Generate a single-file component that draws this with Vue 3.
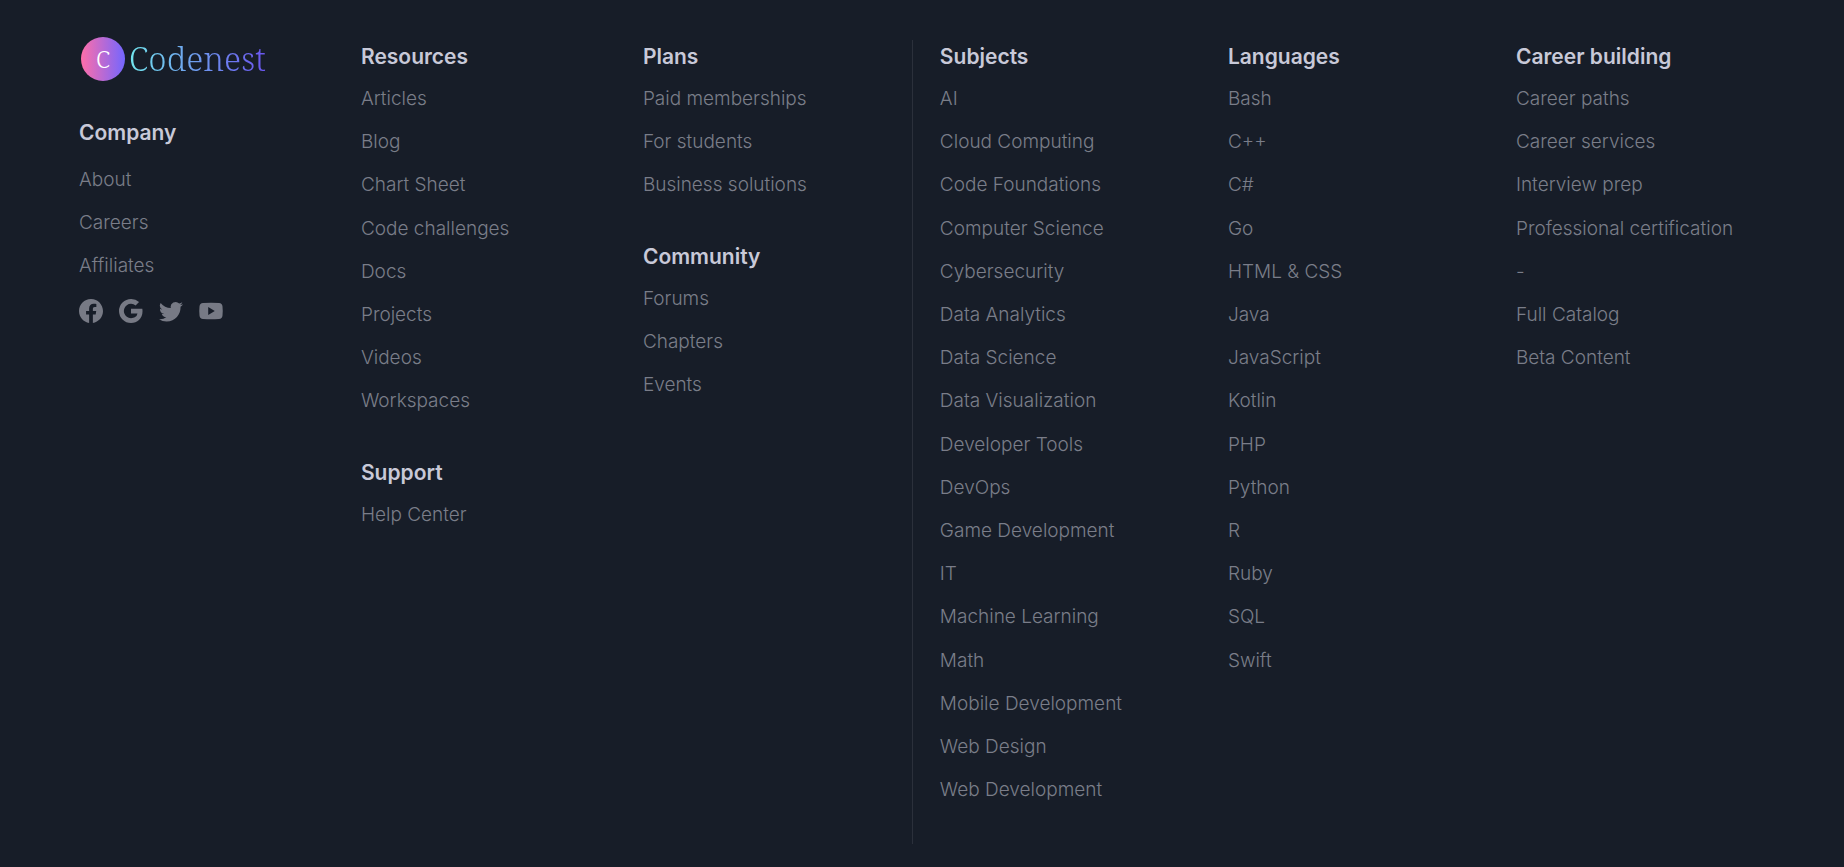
<script setup>
const resources = [
  { title: 'Resources', items: ['Articles', 'Blog', 'Chart Sheet', 'Code challenges', 'Docs', 'Projects', 'Videos', 'Workspaces'] },
  { title: 'Support', items: ['Help Center'] },
]
const plans = [
  { title: 'Plans', items: ['Paid memberships', 'For students', 'Business solutions'] },
  { title: 'Community', items: ['Forums', 'Chapters', 'Events'] },
]
const company = ['About', 'Careers', 'Affiliates']
const columns = [resources, plans]
const catalog = [
  {
    title: 'Subjects',
    items: ['AI', 'Cloud Computing', 'Code Foundations', 'Computer Science', 'Cybersecurity', 'Data Analytics', 'Data Science', 'Data Visualization', 'Developer Tools', 'DevOps', 'Game Development', 'IT', 'Machine Learning', 'Math', 'Mobile Development', 'Web Design', 'Web Development'],
  },
  {
    title: 'Languages',
    items: ['Bash', 'C++', 'C#', 'Go', 'HTML & CSS', 'Java', 'JavaScript', 'Kotlin', 'PHP', 'Python', 'R', 'Ruby', 'SQL', 'Swift'],
  },
  {
    title: 'Career building',
    items: ['Career paths', 'Career services', 'Interview prep', 'Professional certification', '-', 'Full Catalog', 'Beta Content'],
  },
]
const socials = [
  {
    name: 'Facebook',
    box: '0 0 16 16',
    path: 'M16 8.049c0-4.446-3.582-8.05-8-8.05C3.58 0-.002 3.603-.002 8.05c0 4.017 2.926 7.347 6.75 7.951v-5.625h-2.03V8.05H6.75V6.275c0-2.017 1.195-3.131 3.022-3.131.876 0 1.791.157 1.791.157v1.98h-1.009c-.993 0-1.303.621-1.303 1.258v1.51h2.218l-.354 2.326H9.25V16c3.824-.604 6.75-3.934 6.75-7.951z',
  },
  {
    name: 'Google',
    box: '0 0 16 16',
    path: 'M15.545 6.558a9.42 9.42 0 0 1 .139 1.626c0 2.434-.87 4.492-2.384 5.885h.002C11.978 15.292 10.158 16 8 16A8 8 0 1 1 8 0a7.689 7.689 0 0 1 5.352 2.082l-2.284 2.284A4.347 4.347 0 0 0 8 3.166c-2.087 0-3.86 1.408-4.492 3.304a4.792 4.792 0 0 0 0 3.063h.003c.635 1.893 2.405 3.301 4.492 3.301 1.078 0 2.004-.276 2.722-.764h-.003a3.702 3.702 0 0 0 1.599-2.431H8v-3.08h7.545z',
  },
  {
    name: 'Twitter',
    box: '0 0 16 16',
    path: 'M5.026 15c6.038 0 9.341-5.003 9.341-9.334 0-.14 0-.282-.006-.422A6.685 6.685 0 0 0 16 3.542a6.658 6.658 0 0 1-1.889.518 3.301 3.301 0 0 0 1.447-1.817 6.533 6.533 0 0 1-2.087.793A3.286 3.286 0 0 0 7.875 6.03a9.325 9.325 0 0 1-6.767-3.429 3.289 3.289 0 0 0 1.018 4.382A3.323 3.323 0 0 1 .64 6.575v.045a3.288 3.288 0 0 0 2.632 3.218 3.203 3.203 0 0 1-.865.115 3.23 3.23 0 0 1-.614-.057 3.283 3.283 0 0 0 3.067 2.277A6.588 6.588 0 0 1 .78 13.58a6.32 6.32 0 0 1-.78-.045A9.344 9.344 0 0 0 5.026 15z',
  },
  {
    name: 'YouTube',
    box: '0 0 24 24',
    path: 'M4 4Q12 3.400 20 4Q23.200 4.300 23.500 7.500Q24 12 23.500 16.500Q23.200 19.700 20 20Q12 20.600 4 20Q.8 19.700 .5 16.500Q0 12 .5 7.500Q.8 4.300 4 4zM9.200 8v8l6.600-4z',
  },
]
</script>

<template>
  <footer class="footer">
    <div class="group">
      <div>
        <a class="brand" href="#" aria-label="Codenest">
          <span class="mark">C</span>
          <span class="name">Codenest</span>
        </a>
        <nav class="section company">
          <h2>Company</h2>
          <ul>
            <li v-for="item in company" :key="item"><a href="#">{{ item }}</a></li>
          </ul>
          <div class="socials">
            <a v-for="s in socials" :key="s.name" href="#" :aria-label="s.name">
              <svg :viewBox="s.box" aria-hidden="true"><path fill-rule="evenodd" :d="s.path" /></svg>
            </a>
          </div>
        </nav>
      </div>
      <div v-for="(column, i) in columns" :key="i">
        <nav v-for="section in column" :key="section.title" class="section">
          <h2>{{ section.title }}</h2>
          <ul>
            <li v-for="item in section.items" :key="item"><a href="#">{{ item }}</a></li>
          </ul>
        </nav>
      </div>
    </div>
    <div class="group catalog">
      <nav v-for="section in catalog" :key="section.title" class="section">
        <h2>{{ section.title }}</h2>
        <ul>
          <li v-for="item in section.items" :key="item"><a href="#">{{ item }}</a></li>
        </ul>
      </nav>
    </div>
  </footer>
</template>

<style>
body {
  margin: 0;
  background: #171d28;
}
</style>

<style scoped>
.footer {
  display: grid;
  grid-template-columns: 18fr 19fr;
  box-sizing: border-box;
  min-height: 100vh;
  padding: 40px 53px 20px 79px;
  align-items: start;
  background: #171d28;
  font-family: Inter, "Liberation Sans", sans-serif;
  font-size: 18px;
  font-weight: 300;
  line-height: 2.4em;
  color: #7a7d89;
}
.group {
  display: grid;
  grid-template-columns: repeat(3, minmax(0, 1fr));
  column-gap: 13px;
}
.catalog {
  padding-left: 27px;
  border-left: 1px solid #2b303b;
}
.section {
  padding-bottom: 33px;
}
h2 {
  margin: 0 0 3px;
  font-size: 21px;
  font-weight: 600;
  line-height: 34px;
  color: #c8c9d8;
}
ul {
  margin: 0;
  padding: 0;
  list-style: none;
  font-size: 19px;
}
a {
  color: inherit;
  text-decoration: none;
}
.brand {
  display: flex;
  align-items: center;
  gap: 4px;
  height: 37px;
  padding-left: 2px;
  line-height: 36px;
  font-family: "Noto Serif", "Liberation Serif", serif;
}
.mark {
  display: grid;
  place-items: center;
  width: 44px;
  height: 44px;
  border-radius: 50%;
  background: linear-gradient(90deg, #ff6ea9, #7366ff);
  color: #fff;
  font-size: 24px;
}
.name {
  font-size: 33px;
  background: linear-gradient(90deg, #72e6ee, #6fa8ee 40%, #6a55ee);
  background-clip: text;
  color: transparent;
}
.company {
  padding-top: 39px;
}
.company h2 {
  margin-bottom: 8px;
}
.socials {
  display: flex;
  gap: 16px;
  padding-top: 11px;
}
.socials a {
  display: block;
  width: 24px;
  height: 24px;
}
.socials svg {
  display: block;
  width: 24px;
  height: 24px;
  fill: #777a85;
}
</style>
